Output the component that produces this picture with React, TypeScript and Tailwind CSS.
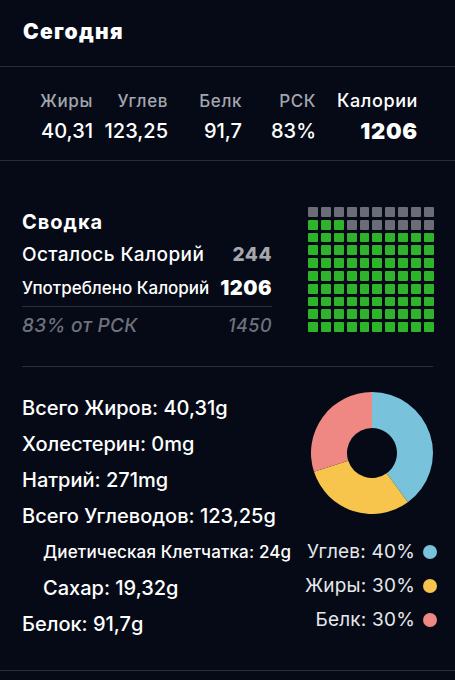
import React from "react";

const font = { fontFamily: "Inter, 'Noto Sans', 'Liberation Sans', sans-serif" };

const stats = [
  { label: "Жиры", value: "40,31", w: "w-[70px]" },
  { label: "Углев", value: "123,25", w: "w-[75px]" },
  { label: "Белк", value: "91,7", w: "w-[74px]" },
  { label: "РСК", value: "83%", w: "w-[74px]" },
];

function Waffle() {
  const cells = Array.from({ length: 100 }, (_, i) => {
    const gray = i < 10 || (i >= 13 && i < 20);
    return (
      <div
        key={i}
        className={gray ? "bg-[#6a6c77] rounded-[1px]" : "bg-[#2db42b] rounded-[1px]"}
      />
    );
  });
  return <div className="grid grid-cols-10 grid-rows-10 gap-[3px] w-[126px] h-[125px]">{cells}</div>;
}

function Donut() {
  return (
    <svg width="122" height="122" viewBox="0 0 122 122" className="mr-[4px]">
      <path d="M61 0 A61 61 0 0 1 96.855 110.35 L75.69 81.22 A25 25 0 0 0 61 36 Z" fill="#79c2dc" />
      <path d="M96.855 110.35 A61 61 0 0 1 2.98 79.85 L37.22 68.73 A25 25 0 0 0 75.69 81.22 Z" fill="#f7c54b" />
      <path d="M2.98 79.85 A61 61 0 0 1 61 0 L61 36 A25 25 0 0 0 37.22 68.73 Z" fill="#ef8883" />
    </svg>
  );
}

const legend = [
  { t: "Углев: 40%", c: "bg-[#79c2dc]" },
  { t: "Жиры: 30%", c: "bg-[#f7c54b]" },
  { t: "Белк: 30%", c: "bg-[#ef8883]" },
];

export default function App() {
  return (
    <div className="w-[455px] h-[680px] bg-[#050a16] text-white overflow-hidden" style={font}>
      <div className="h-[67px] border-b border-[#272c37] flex items-center pl-[23px] pb-[3px]">
        <h1 className="text-[21px] font-black tracking-[1.3px]">Сегодня</h1>
      </div>

      <div className="h-[94px] border-b border-[#272c37] pt-[23px] pl-[23px] flex">
        {stats.map((s) => (
          <div key={s.label} className={`${s.w} flex flex-col items-end gap-[8px]`}>
            <span className="text-[17px] leading-[22px] font-medium tracking-[0.6px] text-[#a3a6ae]">{s.label}</span>
            <span className="text-[20px] leading-[22px] font-medium text-white">{s.value}</span>
          </div>
        ))}
        <div className="w-[102px] flex flex-col items-end gap-[8px]">
          <span className="text-[18px] leading-[22px] font-medium tracking-[0.6px] text-white">Калории</span>
          <span className="text-[22px] leading-[22px] font-black tracking-[0.8px] text-white">1206</span>
        </div>
      </div>

      <div className="h-[205px] pt-[46px] pl-[22px] flex">
        <div className="w-[250px] flex flex-col">
          <div className="text-[20px] leading-[26px] font-bold tracking-[1px] mt-[2px]">Сводка</div>
          <div className="mt-[8px] flex justify-between items-center leading-[24px]">
            <span className="text-[19px] font-medium tracking-[0.4px]">Осталось Калорий</span>
            <span className="text-[19px] font-extrabold tracking-[0.5px] text-[#a5a7af]">244</span>
          </div>
          <div className="mt-[9px] flex justify-between items-center leading-[24px]">
            <span className="text-[17px] font-medium">Употреблено Калорий</span>
            <span className="text-[20px] font-black tracking-[0.5px]">1206</span>
          </div>
          <div className="mt-[6px] border-t border-[#2a2f3a]" />
          <div className="mt-[7px] flex justify-between items-center leading-[24px] italic text-[#6f727c]">
            <span className="text-[19px] font-medium tracking-[0.3px]">83% от РСК</span>
            <span className="text-[18px] font-medium tracking-[0.5px]">1450</span>
          </div>
        </div>
        <div className="ml-[36px]">
          <Waffle />
        </div>
      </div>

      <div className="mx-[22px] border-t border-[#2a2f3a]" />

      <div className="h-[304px] border-b border-[#2a2f3a] flex justify-between pl-[22px] pr-[18px] pt-[23px]">
        <div className="flex flex-col text-[20px] leading-[36px] font-medium">
          <span>Всего Жиров: 40,31g</span>
          <span>Холестерин: 0mg</span>
          <span>Натрий: 271mg</span>
          <span>Всего Углеводов: 123,25g</span>
          <span className="pl-[21px] text-[17px] tracking-[0.15px]">Диетическая Клетчатка: 24g</span>
          <span className="pl-[21px]">Сахар: 19,32g</span>
          <span>Белок: 91,7g</span>
        </div>
        <div className="flex flex-col items-end pt-[2px]">
          <Donut />
          <div className="mt-[21px] flex flex-col items-end">
            {legend.map((l) => (
              <div key={l.t} className="h-[34px] flex items-center gap-[8px]">
                <span className="text-[19px] tracking-[0.2px] text-[#e6e7ea]">{l.t}</span>
                <span className={`w-[14px] h-[14px] rounded-full ${l.c}`} />
              </div>
            ))}
          </div>
        </div>
      </div>
    </div>
  );
}
